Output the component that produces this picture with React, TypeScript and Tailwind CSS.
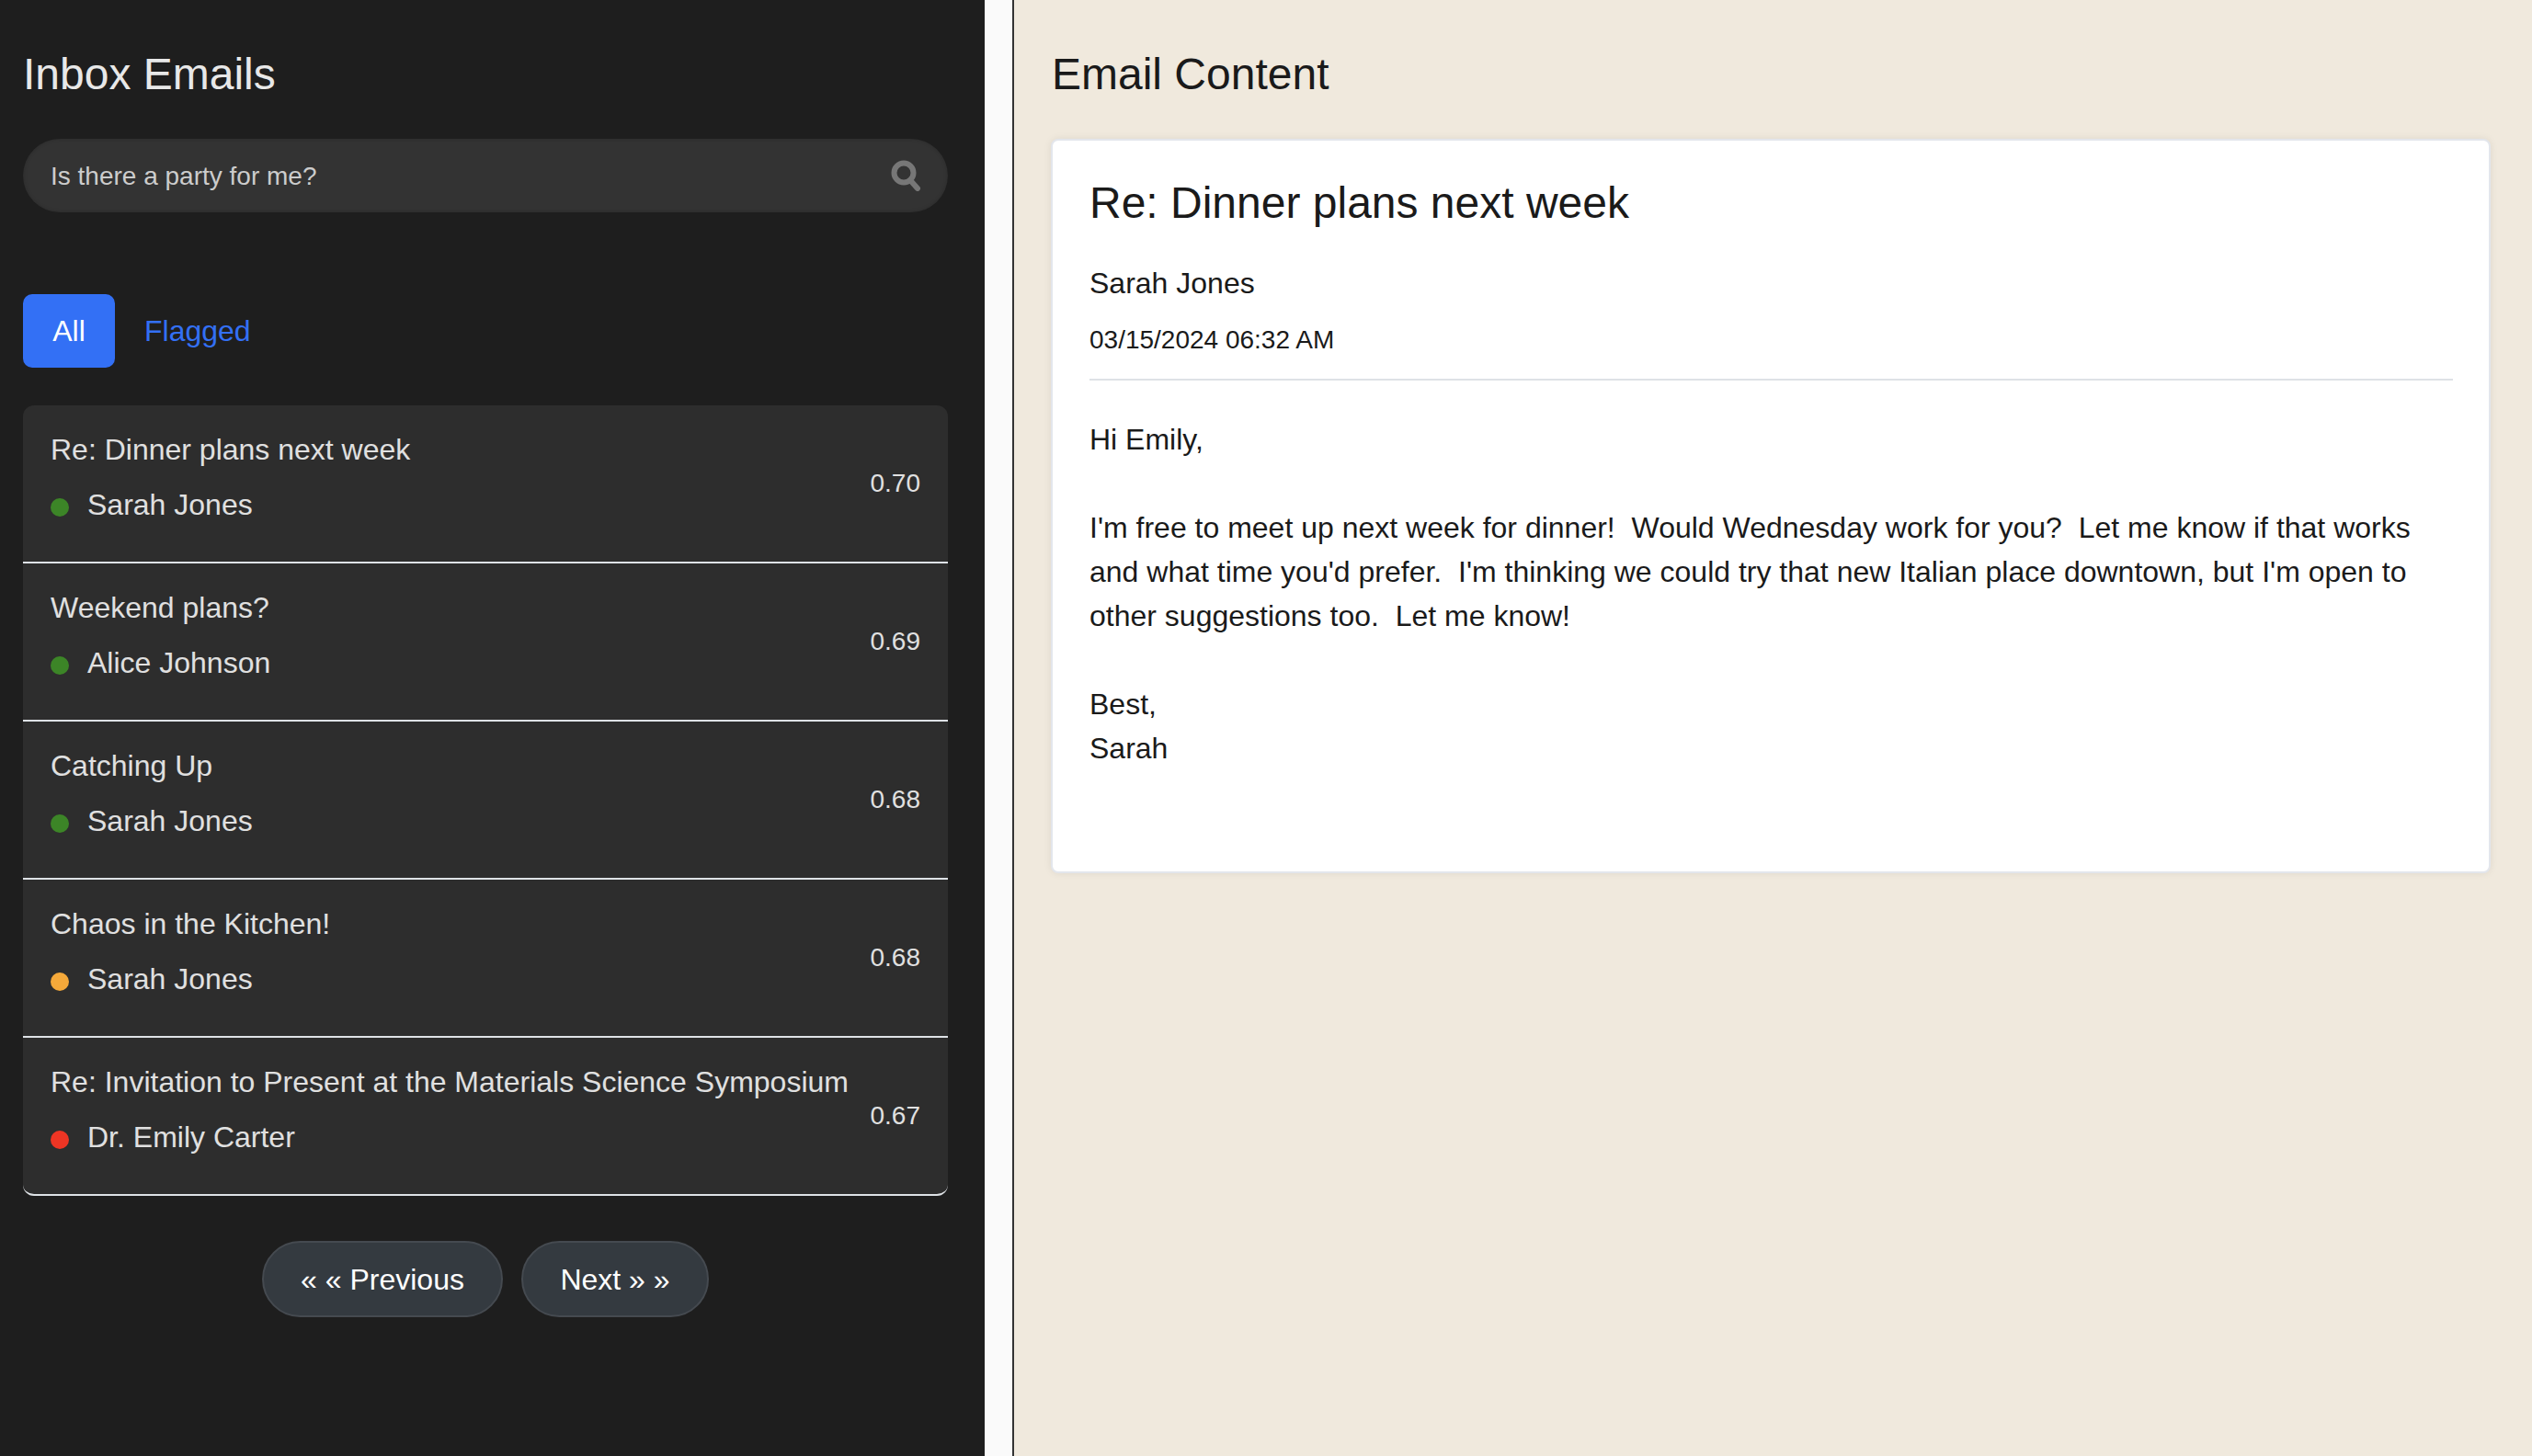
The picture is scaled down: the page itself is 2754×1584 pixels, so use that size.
import React from 'react';

const emails = [
  { subject: 'Re: Dinner plans next week', sender: 'Sarah Jones', score: '0.70', dot: 'bg-[#3c8527]' },
  { subject: 'Weekend plans?', sender: 'Alice Johnson', score: '0.69', dot: 'bg-[#3c8527]' },
  { subject: 'Catching Up', sender: 'Sarah Jones', score: '0.68', dot: 'bg-[#3c8527]' },
  { subject: 'Chaos in the Kitchen!', sender: 'Sarah Jones', score: '0.68', dot: 'bg-[#f5a93a]' },
  { subject: 'Re: Invitation to Present at the Materials Science Symposium', sender: 'Dr. Emily Carter', score: '0.67', dot: 'bg-[#ee3524]' },
];

const EmailRow = ({ subject, sender, score, dot }: (typeof emails)[number]) => (
  <div className="flex h-[172px] items-center justify-between border-b-2 border-[#dee2e6] px-[30px] pb-[2px] last:rounded-b-[12px]">
    <div className="mb-[12px] flex flex-col">
      <div className="text-[32px] leading-[48px] text-[#e0e0e0]">{subject}</div>
      <div className="mt-[12px] flex items-center text-[32px] leading-[48px] text-[#e0e0e0]">
        <span className={`mr-[20px] mt-[6px] h-[20px] w-[20px] rounded-full ${dot}`} />
        {sender}
      </div>
    </div>
    <div className="mt-[2px] text-[28px] leading-[42px] text-[#e0e0e0]">{score}</div>
  </div>
);

export default function App() {
  return (
    <div className="flex h-[1584px] w-[2754px] overflow-hidden font-['Liberation_Sans',Arial,sans-serif]">
      <div className="flex w-[1071px] flex-col bg-[#1e1e1e] pl-[25px] pr-[40px]">
        <h1 className="mt-[51px] text-[48px] leading-[60px] text-[#e8e8e8]">Inbox Emails</h1>
        <div className="mt-[40px] flex h-[80px] items-center justify-between rounded-full bg-[#333333] pl-[30px] pr-[28px] shadow-[inset_0_0_4px_rgba(0,0,0,0.2)]">
          <span className="mt-[2px] text-[28px] text-[#cccccc]">Is there a party for me?</span>
          <svg width="34" height="34" viewBox="0 0 34 34" fill="none" stroke="#777777" strokeWidth="6">
            <circle cx="14" cy="14" r="10.5" />
            <path d="M21 22 L29 31" strokeLinecap="round" />
          </svg>
        </div>
        <div className="mt-[89px] flex items-center gap-[2px]">
          <div className="flex h-[80px] w-[100px] items-center justify-center rounded-[10px] bg-[#3370f5] text-[32px] text-white">All</div>
          <div className="px-[30px] text-[32px] text-[#3370f5]">Flagged</div>
        </div>
        <div className="mt-[41px] rounded-[12px] bg-[#2d2d2d]">
          {emails.map((e) => (
            <EmailRow key={e.subject} {...e} />
          ))}
        </div>
        <div className="mt-[49px] flex justify-center gap-[20px]">
          <button className="flex h-[83px] w-[262px] items-center justify-center rounded-full border-2 border-[#454a50] bg-[#343a40] text-[32px] text-white">« « Previous</button>
          <button className="flex h-[83px] w-[204px] items-center justify-center rounded-full border-2 border-[#454a50] bg-[#343a40] text-[32px] text-white">Next » »</button>
        </div>
      </div>
      <div className="w-[30px] bg-[#fafafa]" />
      <div className="w-[2px] bg-[#333333]" />
      <div className="flex-1 bg-[#f0e9dd] pl-[41px] pr-[45px]">
        <h2 className="mt-[51px] text-[48px] leading-[60px] text-[#1a1a1a]">Email Content</h2>
        <div className="-ml-[1px] mt-[40px] h-[799px] rounded-[8px] border-2 border-[#e3e6ec] bg-white pl-[40px] pr-[39px] pt-[38px] shadow-[0_0_8px_rgba(0,0,0,0.08)]">
          <h3 className="text-[48px] leading-[60px] text-[#1a1a1a]">Re: Dinner plans next week</h3>
          <div className="mt-[33px] text-[32px] leading-[48px] text-[#1a1a1a]">Sarah Jones</div>
          <div className="mt-[17px] text-[28px] leading-[42px] text-[#1a1a1a]">03/15/2024 06:32 AM</div>
          <div className="mt-[21px] border-t-2 border-[#dee2e6]" />
          <div className="mt-[40px] whitespace-pre-wrap text-[32px] leading-[48px] text-[#1a1a1a]">
            {"Hi Emily,\n\nI'm free to meet up next week for dinner!  Would Wednesday work for you?  Let me know if that works and what time you'd prefer.  I'm thinking we could try that new Italian place downtown, but I'm open to other suggestions too.  Let me know!\n\nBest,\nSarah"}
          </div>
        </div>
      </div>
    </div>
  );
}
